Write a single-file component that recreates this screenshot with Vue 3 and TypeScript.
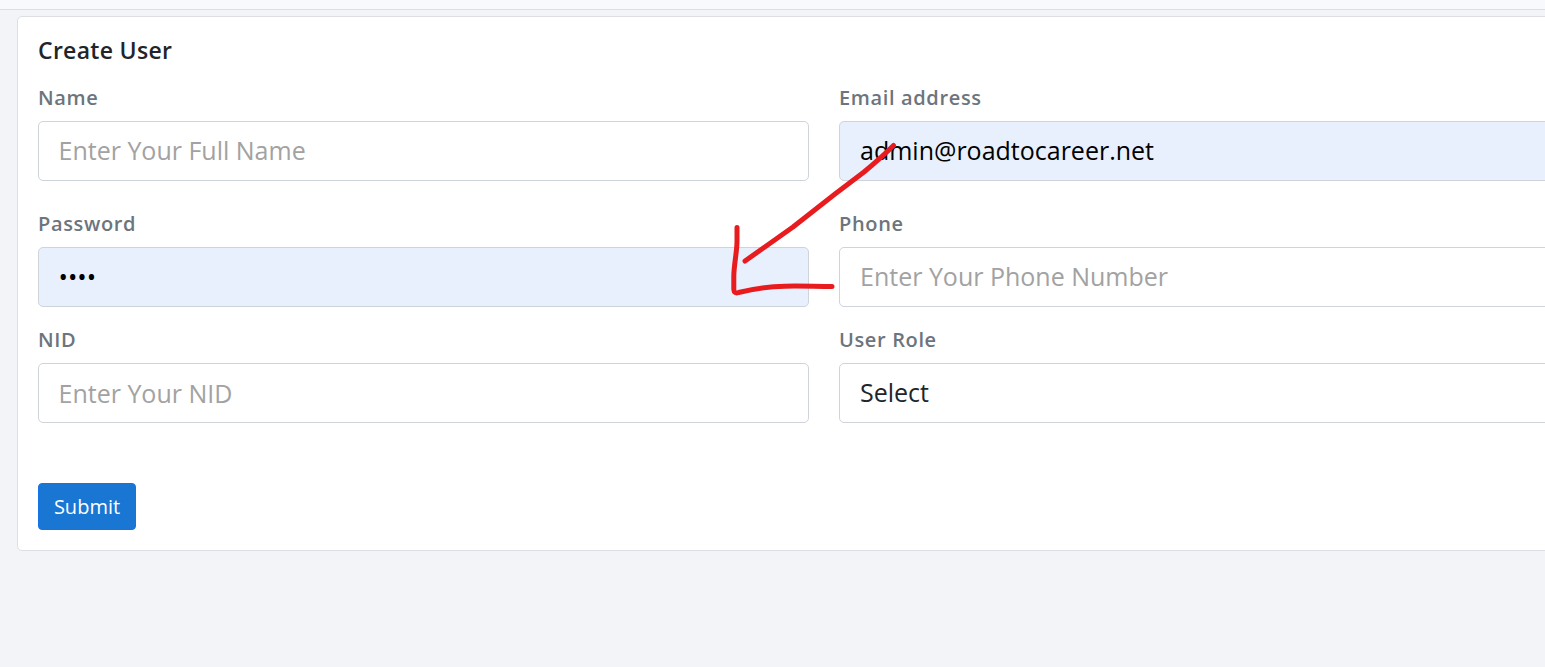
<script setup lang="ts">
import { ref } from 'vue'

interface Field {
  id: string
  label: string
  placeholder?: string
  value: string
  filled?: boolean
  kind: 'input' | 'select'
}

const rows = ref<Field[][]>([
  [
    { id: 'name', label: 'Name', placeholder: 'Enter Your Full Name', value: '', kind: 'input' },
    { id: 'email', label: 'Email address', value: 'admin@roadtocareer.net', filled: true, kind: 'input' },
  ],
  [
    { id: 'password', label: 'Password', value: '••••', filled: true, kind: 'input' },
    { id: 'phone', label: 'Phone', placeholder: 'Enter Your Phone Number', value: '', kind: 'input' },
  ],
  [
    { id: 'nid', label: 'NID', placeholder: 'Enter Your NID', value: '', kind: 'input' },
    { id: 'role', label: 'User Role', value: 'Select', kind: 'select' },
  ],
])
</script>

<template>
  <div class="page">
    <header class="topbar"></header>
    <main class="card">
      <h4 class="title">Create User</h4>
      <form @submit.prevent>
        <div v-for="(row, i) in rows" :key="i" class="row" :class="`row-${i}`">
          <div v-for="field in row" :key="field.id" class="group">
            <label class="label" :for="field.id">{{ field.label }}</label>
            <select v-if="field.kind === 'select'" :id="field.id" v-model="field.value" class="control">
              <option>Select</option>
            </select>
            <input
              v-else
              :id="field.id"
              v-model="field.value"
              class="control"
              :class="[field.id, { filled: field.filled }]"
              type="text"
              :placeholder="field.placeholder"
            />
          </div>
        </div>
        <button class="submit" type="submit">Submit</button>
      </form>
    </main>
    <svg class="arrow" width="1545" height="667" viewBox="0 0 1545 667" fill="none" aria-hidden="true">
      <path d="M893.5 145.500C888 151 876 162 864 172L835 194L793 227L745 261" />
      <path d="M737 227.500V241C737 252 734 264 733.800 276V289.500Q734 294 738.500 292.500C754 288.500 768 286.500 785 286.200C801 285.800 816 286.500 832 286.500" />
    </svg>
  </div>
</template>

<style>
body {
  margin: 0;
  overflow: hidden;
}
</style>

<style scoped>
.page {
  position: relative;
  box-sizing: border-box;
  width: 1545px;
  height: 667px;
  overflow: hidden;
  background: #f3f4f8;
  font-family: 'Open Sans', 'Noto Sans', sans-serif;
}
.topbar {
  box-sizing: border-box;
  height: 10px;
  background: #f8f9fc;
  border-bottom: 1px solid #dddee1;
}
.card {
  box-sizing: border-box;
  width: 1613px;
  height: 535px;
  margin: 6px 0 0 17px;
  padding: 17px 20px 0;
  background: #fff;
  border: 1px solid #dedfe2;
  border-radius: 5px;
}
.title {
  height: 33px;
  margin: 0 0 17px;
  color: #212529;
  font-size: 23px;
  font-weight: 600;
  line-height: 33px;
  letter-spacing: 0.3px;
}
.row {
  display: grid;
  grid-template-columns: 771px 771px;
  column-gap: 30px;
  height: 126px;
}
.row-1 {
  height: 116px;
}
.group {
  display: flex;
  flex-direction: column;
}
.label {
  height: 30px;
  margin: 0 0 7px;
  color: #6c757d;
  font-size: 20px;
  font-weight: 600;
  line-height: 28px;
  letter-spacing: 0.64px;
}
.control {
  box-sizing: border-box;
  width: 100%;
  height: 60px;
  padding: 0 20px 2px;
  color: #212529;
  font-family: inherit;
  font-size: 25px;
  line-height: 38px;
  background: #fff;
  border: 1px solid #ced4da;
  border-radius: 5px;
  outline: none;
  appearance: none;
}
.name,
.nid,
.password {
  padding-left: 19.5px;
}
.nid {
  padding-bottom: 0;
}
.control::placeholder {
  color: #a2a2a2;
  opacity: 1;
}
.filled {
  color: #000;
  background: #e8f0fe;
}
.submit {
  display: block;
  width: 98px;
  height: 47px;
  margin-top: 31px;
  padding: 0;
  color: #fff;
  font-family: inherit;
  font-size: 20px;
  line-height: 30px;
  background: #1976d2;
  border: 1px solid #1473e6;
  border-radius: 4px;
}
.arrow {
  position: absolute;
  inset: 0;
  pointer-events: none;
}
.arrow path {
  stroke: #e81c1e;
  stroke-width: 5;
  stroke-linecap: round;
  stroke-linejoin: round;
}
</style>
